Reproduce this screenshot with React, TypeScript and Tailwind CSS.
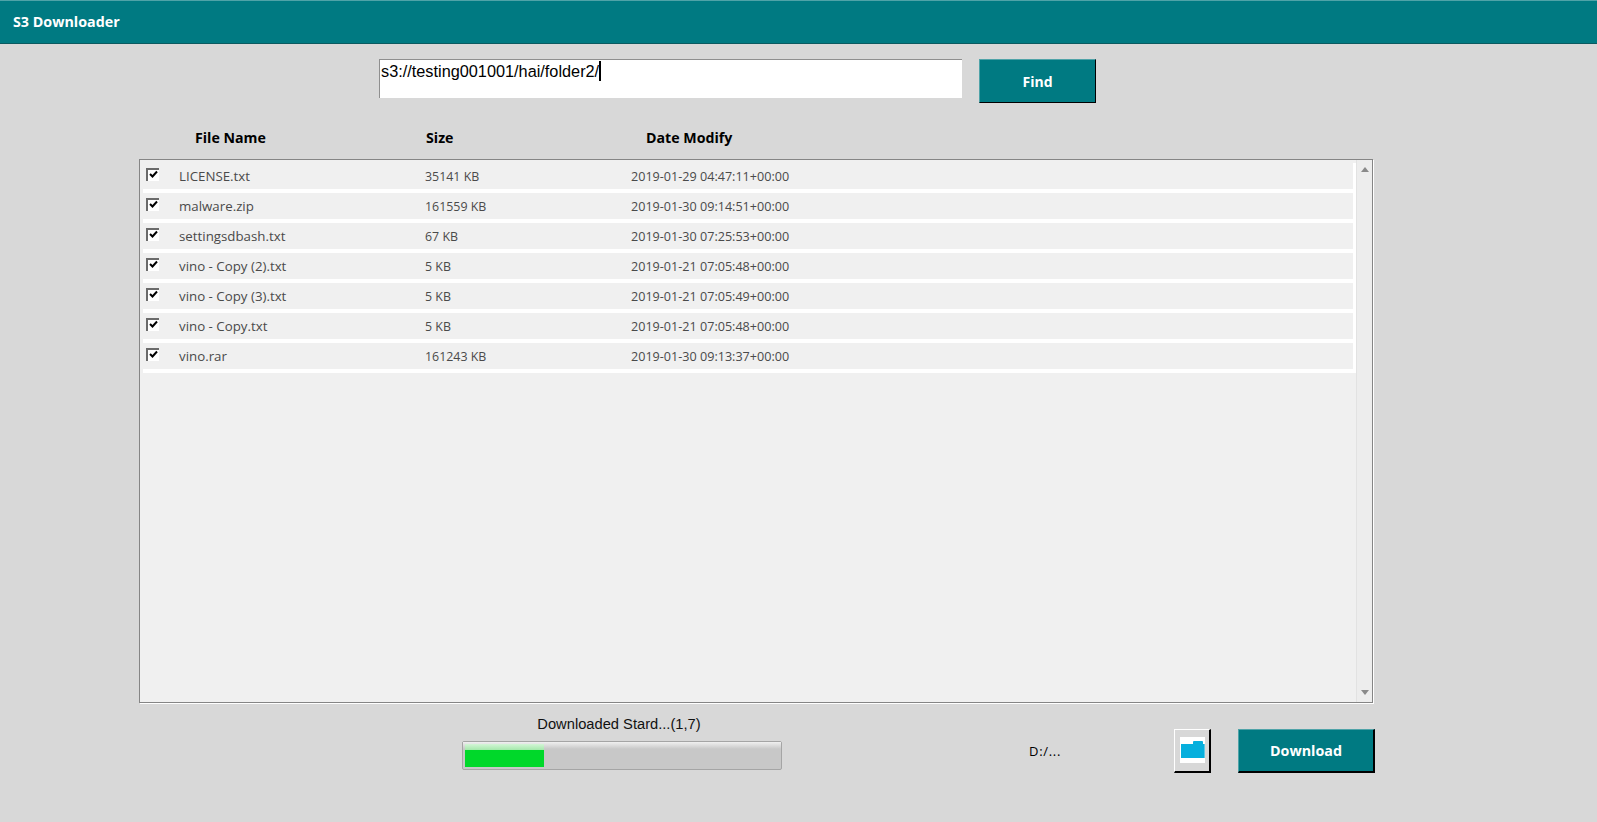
import React, { FC } from "react";

interface FileRow {
  name: string;
  size: string;
  date: string;
}

const files: FileRow[] = [
  { name: "LICENSE.txt", size: "35141 KB", date: "2019-01-29 04:47:11+00:00" },
  { name: "malware.zip", size: "161559 KB", date: "2019-01-30 09:14:51+00:00" },
  { name: "settingsdbash.txt", size: "67 KB", date: "2019-01-30 07:25:53+00:00" },
  { name: "vino - Copy (2).txt", size: "5 KB", date: "2019-01-21 07:05:48+00:00" },
  { name: "vino - Copy (3).txt", size: "5 KB", date: "2019-01-21 07:05:49+00:00" },
  { name: "vino - Copy.txt", size: "5 KB", date: "2019-01-21 07:05:48+00:00" },
  { name: "vino.rar", size: "161243 KB", date: "2019-01-30 09:13:37+00:00" },
];

const CheckBox: FC = () => (
  <div className="w-[13px] h-[13px] mt-[-6px] bg-white border-t-2 border-l-2 border-[#6a6a6a] flex items-center justify-center shrink-0">
    <svg width="10" height="10" viewBox="0 0 10 10">
      <path d="M1 4 L3.5 6.5 L8 1.5" fill="none" stroke="#000" strokeWidth="2" />
    </svg>
  </div>
);

const App: FC = () => {
  return (
    <div className="w-[1597px] h-[822px] overflow-hidden bg-[#d8d8d8] font-['Open_Sans',sans-serif]">
      <div className="h-[44px] bg-[#007a82] border-t border-t-[#4fa3a8] border-b border-b-[#0b5a60] flex items-center pl-[13px] text-white text-[14.3px] font-bold">
        S3 Downloader
      </div>

      {/* search */}
      <div className="flex items-start pl-[379px] pt-[15px]">
        <div className="w-[583px] h-[39px] bg-white border-t border-l border-[#8f8f8f] border-r-[#e8e8e8] border-b-[#e8e8e8] flex items-start pl-[1px] pt-[1px] font-['Liberation_Sans',sans-serif] text-[16.3px] leading-[20px] text-black">
          s3://testing001001/hai/folder2/
          <span className="w-[2px] h-[20px] bg-black" />
        </div>
        <button className="ml-[17px] w-[117px] h-[44px] bg-[#007a82] border-t border-l border-[#4fa3a8] border-r border-r-black border-b border-b-black text-white text-[14px] font-bold">
          Find
        </button>
      </div>

      {/* column titles */}
      <div className="flex h-[22px] mt-[24px] text-[14.2px] leading-[22px] font-bold text-black">
        <span className="ml-[195px] w-[231px]">File Name</span>
        <span className="w-[220px]">Size</span>
        <span>Date Modify</span>
      </div>

      {/* file list */}
      <div className="ml-[139px] mt-[10px] w-[1234px] h-[544px] bg-[#f0f0f0] border border-[#858585] shadow-[1px_1px_0_#ffffff] flex">
        <div className="flex-1 pl-[3px] pt-[3px] flex flex-col">
          {files.map((file) => (
            <div
              key={file.name}
              className="h-[30px] pt-[2px] border-b-4 border-r-[3px] border-white flex items-center text-[#4a4a4a]"
            >
              <div className="w-[36px] pl-[3px]">
                <CheckBox />
              </div>
              <span className="w-[246px] text-[13.3px]">{file.name}</span>
              <span className="w-[206px] text-[12.4px]">{file.size}</span>
              <span className="text-[12.6px]">{file.date}</span>
            </div>
          ))}
        </div>
        <div className="w-[16px] bg-[#ededed] border-l border-[#e2e2e2] flex flex-col justify-between items-center py-[7px]">
          <svg width="8" height="5" viewBox="0 0 8 5">
            <path d="M4 0 L8 5 L0 5 Z" fill="#8a8a8a" />
          </svg>
          <svg width="8" height="5" viewBox="0 0 8 5">
            <path d="M0 0 L8 0 L4 5 Z" fill="#8a8a8a" />
          </svg>
        </div>
      </div>

      {/* bottom controls */}
      <div className="flex items-start mt-[11px]">
        <div className="ml-[462px] w-[320px]">
          <div className="text-center font-['Liberation_Sans',sans-serif] text-[14.7px] leading-[20px] text-[#111] pr-[6px]">
            Downloaded Stard...(1,7)
          </div>
          <div className="mt-[7px] h-[29px] rounded-[2px] border border-[#a5a5a5] bg-[#c8c8c8] p-[2px] relative">
            <div className="absolute left-[0px] right-[0px] top-[0px] h-[7px] bg-linear-to-b from-[#f0f0f0] to-[#c8c8c8]" />
            <div className="relative w-[79px] h-full bg-[#00d82a]">
              <div className="h-[6px] bg-linear-to-b from-[#d3f5d6] to-[#a4e8ab]" />
            </div>
          </div>
        </div>
        <div className="ml-[247px] mt-[27px] w-[40px] text-[13px] tracking-[0.7px] leading-[20px] text-black">D:/...</div>
        <button className="ml-[105px] mt-[15px] w-[37px] h-[44px] bg-[#d8d8d8] border-t border-l border-white border-r-2 border-r-black border-b-2 border-b-black flex items-center justify-center">
          <svg width="25" height="26" viewBox="0 0 25 26" className="mb-[1px]">
            <rect width="25" height="26" fill="#ffffff" />
            <path d="M13 7 L13 5 Q13 4 14 4 L22 4 Q23 4 23 5 L23 7 Z" fill="#06afdd" />
            <path d="M1 7 L25 7 L25 21 L1 21 Z" fill="#06afdd" />
            <path d="M24 7 L25 7 L25 21 L24 21 Z" fill="#5cc9e8" />
          </svg>
        </button>
        <button className="ml-[27px] mt-[15px] w-[137px] h-[44px] bg-[#007a82] border-t border-l border-[#4fa3a8] border-r-2 border-r-black border-b-2 border-b-black text-white text-[14.3px] font-bold">
          Download
        </button>
      </div>
    </div>
  );
};

export default App;
